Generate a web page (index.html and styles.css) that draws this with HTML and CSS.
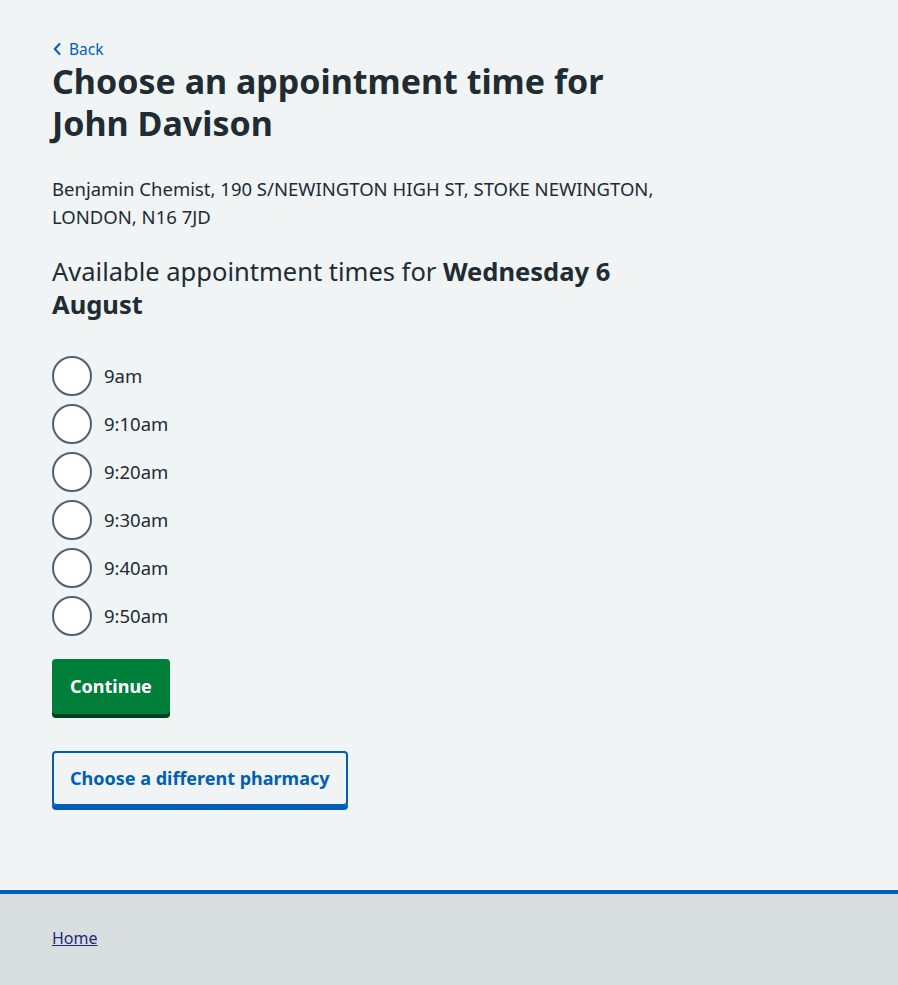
FILE: index.html
```html
<!DOCTYPE html>
<html lang="en">
<head>
<meta charset="utf-8">
<title>Choose an appointment time</title>
<link rel="stylesheet" href="styles.css">
</head>
<body>
<div class="page">
  <main class="main">
    <a class="back" href="#">
      <svg class="back-icon" viewBox="0 0 8 12" width="8" height="12" aria-hidden="true"><path d="M6.5 1 L1.8 6 L6.5 11" fill="none" stroke="#005eb8" stroke-width="2" stroke-linecap="round" stroke-linejoin="round"/></svg>
      <span>Back</span>
    </a>
    <h1 class="title">Choose an appointment time for John Davison</h1>
    <p class="address">Benjamin Chemist, 190 S/NEWINGTON HIGH ST, STOKE NEWINGTON, LONDON, N16 7JD</p>
    <p class="lead">Available appointment times for <strong>Wednesday 6 August</strong></p>
    <div class="radios">
      <label class="radio"><span class="circle"></span><span class="radio-label">9am</span></label>
      <label class="radio"><span class="circle"></span><span class="radio-label">9:10am</span></label>
      <label class="radio"><span class="circle"></span><span class="radio-label">9:20am</span></label>
      <label class="radio"><span class="circle"></span><span class="radio-label">9:30am</span></label>
      <label class="radio"><span class="circle"></span><span class="radio-label">9:40am</span></label>
      <label class="radio"><span class="circle"></span><span class="radio-label">9:50am</span></label>
    </div>
    <div class="actions">
      <button class="btn btn-primary" type="button">Continue</button>
      <button class="btn btn-secondary" type="button">Choose a different pharmacy</button>
    </div>
  </main>
  <footer class="footer">
    <a class="footer-link" href="#">Home</a>
  </footer>
</div>
</body>
</html>
```
FILE: styles.css
```css
html, body {
  margin: 0;
  padding: 0;
  background: #f0f4f5;
  color: #212b32;
  font-family: "Noto Sans", "Open Sans", sans-serif;
}
.page {
  min-height: 985px;
  display: flex;
  flex-direction: column;
}
.main {
  flex: 1;
  padding: 38px 52px 0 52px;
  max-width: 660px;
}
.back {
  display: inline-flex;
  align-items: center;
  gap: 8px;
  color: #005eb8;
  font-size: 15.5px;
  line-height: 20px;
  text-decoration: none;
}
.back-icon {
  margin-left: 1px;
  flex: none;
}
.title {
  margin: 0;
  font-size: 34px;
  line-height: 42px;
  font-weight: 700;
  max-width: 600px;
}
.address {
  margin: 31px 0 0;
  font-size: 18.5px;
  line-height: 28px;
}
.lead {
  margin: 24px 0 0;
  font-size: 25.5px;
  line-height: 33px;
  max-width: 640px;
}
.lead strong { font-weight: 700; }
.radios {
  margin-top: 35px;
  display: flex;
  flex-direction: column;
  gap: 8px;
}
.radio {
  display: flex;
  align-items: center;
  gap: 12px;
}
.circle {
  width: 36px;
  height: 36px;
  border: 2px solid #4c6272;
  border-radius: 50%;
  background: #fff;
  flex: none;
}
.radio-label {
  font-size: 18.5px;
  line-height: 28px;
}
.actions {
  margin-top: 23px;
  display: flex;
  flex-direction: column;
  align-items: flex-start;
  gap: 37px;
}
.btn {
  font-family: inherit;
  font-size: 18px;
  font-weight: 700;
  line-height: 24px;
  border-radius: 4px;
  cursor: pointer;
}
.btn-primary {
  background: #007f3b;
  color: #fff;
  border: 2px solid transparent;
  padding: 13px 16px 14px;
  box-shadow: 0 4px 0 #00401e;
}
.btn-secondary {
  background: transparent;
  color: #005eb8;
  border: 2px solid #005eb8;
  padding: 13px 16px 14px;
  box-shadow: 0 4px 0 #005eb8;
}
.footer {
  margin-top: 80px;
  border-top: 4px solid #005eb8;
  background: #d8dde0;
  height: 95px;
  box-sizing: border-box;
  padding: 32px 52px 0;
  display: flex;
  align-items: flex-start;
}
.footer-link {
  color: #232a7a;
  font-size: 16px;
  line-height: 24px;
  text-decoration: underline;
}
```
